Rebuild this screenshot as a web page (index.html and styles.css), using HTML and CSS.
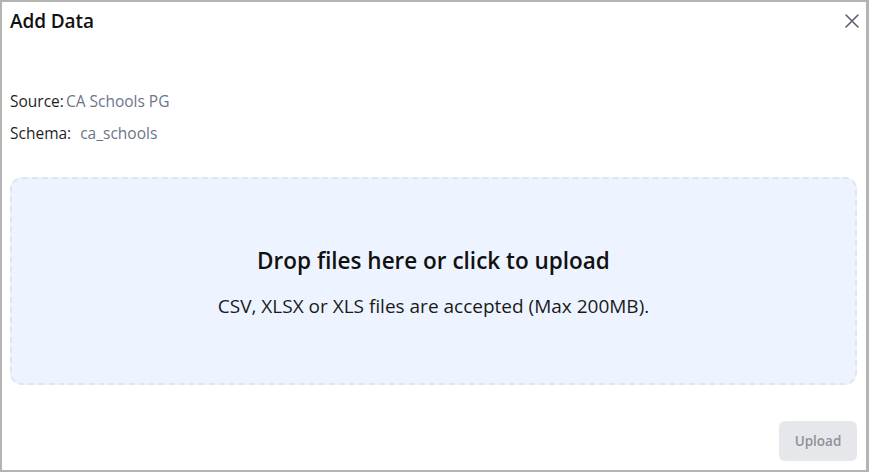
FILE: index.html
```html
<!DOCTYPE html>
<html>
<head>
<meta charset="utf-8">
<link rel="stylesheet" href="styles.css">
</head>
<body>
<div class="dialog">
  <div class="header">
    <h1 class="title">Add Data</h1>
    <button class="close" aria-label="Close">
      <svg width="16" height="16" viewBox="0 0 16 16"><path d="M2 2L14 14M14 2L2 14" stroke="#5b6170" stroke-width="1.6" stroke-linecap="round" fill="none"/></svg>
    </button>
  </div>
  <div class="meta">
    <div class="meta-row"><span class="label">Source:</span><span class="value source">CA Schools PG</span></div>
    <div class="meta-row"><span class="label">Schema:</span><span class="value schema">ca_schools</span></div>
  </div>
  <div class="dropzone">
    <div class="drop-title">Drop files here or click to upload</div>
    <div class="drop-sub">CSV, XLSX or XLS files are accepted (Max 200MB).</div>
  </div>
  <div class="footer">
    <button class="upload" disabled>Upload</button>
  </div>
</div>
</body>
</html>
```
FILE: styles.css
```css
* { box-sizing: border-box; }
html, body { margin: 0; padding: 0; background: #fff; }
body {
  font-family: "Open Sans", "Noto Sans", sans-serif;
  color: #111;
}
.dialog {
  width: 869px;
  height: 472px;
  border: 2px solid #b4b4b4;
  border-right-width: 3px;
  padding: 0 9px 0 8px;
  display: flex;
  flex-direction: column;
}
.header {
  display: flex;
  justify-content: space-between;
  align-items: center;
  height: 38px;
}
.title {
  margin: 0;
  font-size: 19px;
  font-weight: 600;
  color: #111;
  letter-spacing: -0.1px;
}
.close {
  background: none;
  border: none;
  padding: 0;
  margin-right: -3px;
  width: 16px;
  height: 16px;
  display: flex;
}
.meta {
  margin-top: 50px;
  display: flex;
  flex-direction: column;
  gap: 10px;
  font-size: 15.5px;
  line-height: 22px;
}
.label { color: #1f1f1f; }
.value { color: #6b7688; }
.source { margin-left: 2px; }
.schema { margin-left: 9px; }
.dropzone {
  margin-top: 33px;
  height: 208px;
  border: 2px dashed #e0e5ee;
  border-radius: 12px;
  background: #eef4ff;
  display: flex;
  flex-direction: column;
  align-items: center;
  justify-content: center;
  gap: 17px;
  padding-top: 2px;
}
.drop-title {
  font-size: 22.5px;
  font-weight: 600;
  color: #111;
}
.drop-sub {
  font-size: 19px;
  color: #1a1a1a;
}
.footer {
  margin-top: auto;
  margin-bottom: 9px;
  display: flex;
  justify-content: flex-end;
}
.upload {
  font-family: "Open Sans", "Noto Sans", sans-serif;
  width: 78px;
  height: 40px;
  border: none;
  border-radius: 6px;
  background: #e6e7eb;
  color: #8e9299;
  font-size: 13.5px;
  font-weight: 600;
}
```
